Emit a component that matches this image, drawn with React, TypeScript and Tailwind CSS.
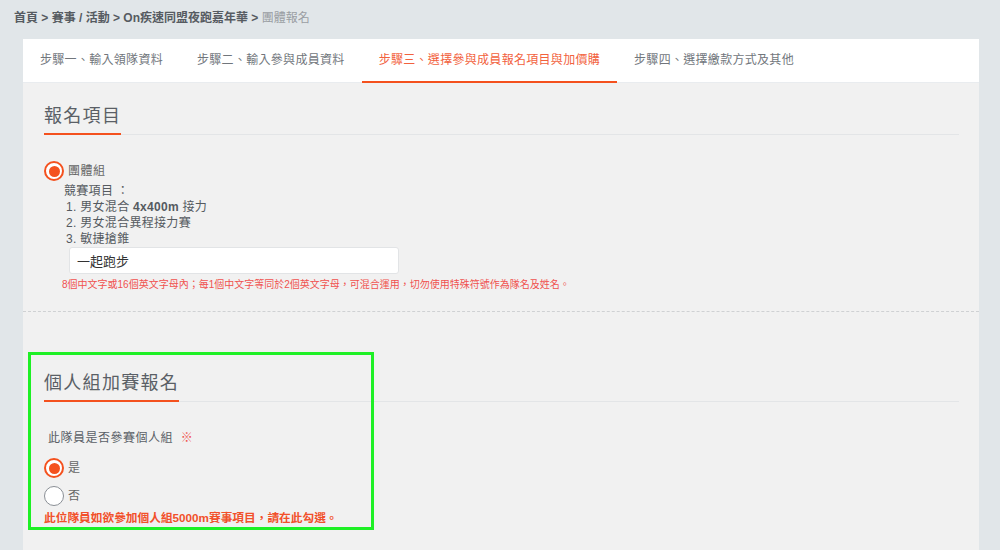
import React, { useState } from 'react';

const font = "font-['Liberation_Sans','Noto_Sans_CJK_TC',sans-serif]";

const tabs = [
    '步驟一、輸入領隊資料',
    '步驟二、輸入參與成員資料',
    '步驟三、選擇參與成員報名項目與加價購',
    '步驟四、選擇繳款方式及其他',
];

const Radio: React.FC<{ checked: boolean; onClick?: () => void; children: React.ReactNode }> = ({ checked, onClick, children }) => (
    <button type="button" onClick={onClick} className="flex items-center gap-[4px] cursor-pointer">
        <span
            className={`h-[20px] w-[20px] rounded-full flex items-center justify-center bg-white ${
                checked ? 'border-2 border-[#f4511e]' : 'border-[1.5px] border-[#8a8f95]'
            }`}
        >
            {checked && <span className="h-[11px] w-[11px] rounded-full bg-[#f4511e]" />}
        </span>
        <span className="text-[12px] leading-[14px] text-[#666] tracking-[0.5px]">{children}</span>
    </button>
);

const SectionTitle: React.FC<{ children: React.ReactNode }> = ({ children }) => (
    <div className="flex border-b border-[#e3e5e7]">
        <h2 className="text-[18px] leading-[24px] tracking-[1.3px] text-[#5a5f66] pb-[5px] border-b-2 border-[#f4511e] -mb-px">
            {children}
        </h2>
    </div>
);

export default function App() {
    const [activeTab, setActiveTab] = useState(2);
    const [teamName, setTeamName] = useState('一起跑步');
    const [joinSolo, setJoinSolo] = useState(true);

    return (
        <div className={`${font} relative h-[550px] overflow-hidden bg-[#e1e6e9]`}>
            {/* Breadcrumb */}
            <div className="h-[39px] pt-[11px] pl-[14px] text-[12px] leading-[14px] font-bold text-[#565b61]">
                首頁 &gt; 賽事 / 活動 &gt; On疾速同盟夜跑嘉年華 &gt; <span className="font-normal text-[#9a9ea3]">團體報名</span>
            </div>

            <div className="ml-[23px] mr-[21px] h-[511px] bg-[#f1f1f1]">
                {/* Tabs */}
                <div className="flex h-[44px] bg-white border-b border-[#e9ecef]">
                    {tabs.map((t, i) => (
                        <button
                            key={t}
                            onClick={() => setActiveTab(i)}
                            className={`px-[17px] h-[44px] text-[12px] tracking-[0.3px] border-b-2 ${
                                i === activeTab ? 'text-[#f2613d] border-[#f4511e]' : 'text-[#71767c] border-transparent'
                            }`}
                        >
                            {t}
                        </button>
                    ))}
                </div>

                {/* 報名項目 */}
                <div className="border-b border-dashed border-[#cfd1d3] pb-[20px]">
                    <div className="pl-[21px] pr-[20px] pt-[21px]">
                        <SectionTitle>報名項目</SectionTitle>

                        <div className="mt-[26px]">
                            <Radio checked>團體組</Radio>
                            <div className="pl-[20px] mt-[2px] text-[12px] leading-[16px] text-[#555a60] tracking-[0.3px]">
                                <div>競賽項目 ：</div>
                                <div className="pl-[2px]">
                                    <div>1. 男女混合 <b>4x400m</b> 接力</div>
                                    <div>2. 男女混合異程接力賽</div>
                                    <div>3. 敏捷搶錐</div>
                                </div>
                            </div>
                            <input
                                value={teamName}
                                onChange={e => setTeamName(e.target.value)}
                                className="ml-[25px] w-[330px] h-[27px] px-[7px] bg-white border border-[#e2e4e6] rounded-[3px] text-[13px] text-[#333] outline-none"
                            />
                            <p className="ml-[18px] mt-[5px] text-[10px] leading-[12px] text-[#f0524f]">
                                8個中文字或16個英文字母內；每1個中文字等同於2個英文字母，可混合運用，切勿使用特殊符號作為隊名及姓名。
                            </p>
                        </div>
                    </div>
                </div>

                {/* 個人組加賽報名 */}
                <div className="pl-[21px] pr-[20px] pt-[59px]">
                    <SectionTitle>個人組加賽報名</SectionTitle>

                    <div className="mt-[29px] pl-[4px] text-[12px] leading-[14px] tracking-[0.5px] text-[#5a5f66]">
                        此隊員是否參賽個人組 <span className="ml-[4px] text-[#f0524f]">※</span>
                    </div>

                    <div className="mt-[13px] flex flex-col gap-[8px]">
                        <Radio checked={joinSolo} onClick={() => setJoinSolo(true)}>是</Radio>
                        <Radio checked={!joinSolo} onClick={() => setJoinSolo(false)}>否</Radio>
                    </div>

                    <p className="mt-[5px] text-[11.7px] leading-[14px] font-bold text-[#f2502a]">
                        此位隊員如欲參加個人組5000m賽事項目，請在此勾選。
                    </p>
                </div>
            </div>

            {/* highlight annotation */}
            <div className="absolute left-[28px] top-[352px] w-[346px] h-[178px] border-[3px] border-[#1ef025] pointer-events-none" />
        </div>
    );
}
